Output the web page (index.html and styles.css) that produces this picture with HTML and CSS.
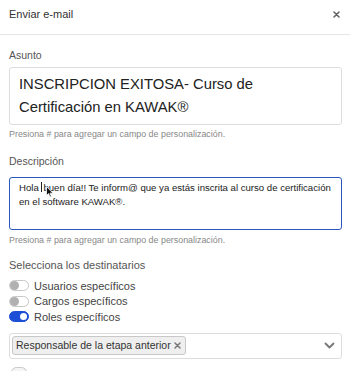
FILE: index.html
```html
<!DOCTYPE html>
<html lang="es">
<head>
<meta charset="utf-8">
<title>Enviar e-mail</title>
<link rel="stylesheet" href="styles.css">
</head>
<body>
<div class="modal">
  <div class="header">
    <span class="title">Enviar e-mail</span>
    <svg class="close" width="7" height="7" viewBox="0 0 7 7"><path d="M1 1 L6 6 M6 1 L1 6" stroke="#666" stroke-width="1.6" stroke-linecap="round"/></svg>
  </div>
  <div class="content">
    <div class="label l-asunto">Asunto</div>
    <div class="subject">INSCRIPCION EXITOSA- Curso de Certificación en KAWAK®</div>
    <div class="help">Presiona # para agregar un campo de personalización.</div>

    <div class="label l-desc">Descripción</div>
    <div class="desc">Hola <span class="caret"></span>buen día!! Te inform@ que ya estás inscrita al curso de certificación<br>en el software KAWAK®.<svg class="cursor" width="8" height="12" viewBox="0 0 8 12"><path d="M0.5 0.5 L0.5 9.5 L2.6 7.6 L4 11 L5.4 10.4 L4 7.2 L7 7.2 Z" fill="#111" stroke="#fff" stroke-width="0.8"/></svg></div>
    <div class="help">Presiona # para agregar un campo de personalización.</div>

    <div class="label l-dest">Selecciona los destinatarios</div>
    <div class="toggles">
      <div class="toggle"><span class="switch"><span class="knob"></span></span><span>Usuarios específicos</span></div>
      <div class="toggle"><span class="switch"><span class="knob"></span></span><span>Cargos específicos</span></div>
      <div class="toggle"><span class="switch on"><span class="knob"></span></span><span>Roles específicos</span></div>
    </div>

    <div class="select">
      <span class="tag">Responsable de la etapa anterior<svg class="tag-x" width="7" height="7" viewBox="0 0 7 7"><path d="M1 1 L6 6 M6 1 L1 6" stroke="#777" stroke-width="1.5" stroke-linecap="round"/></svg></span>
      <svg class="chev" width="11" height="7" viewBox="0 0 11 7"><path d="M1.5 1.5 L5.5 5.5 L9.5 1.5" fill="none" stroke="#777" stroke-width="1.8" stroke-linecap="round" stroke-linejoin="round"/></svg>
    </div>
    <div class="next"><span class="switch"></span></div>
  </div>
</div>
</body>
</html>
```
FILE: styles.css
```css
html, body {
  margin: 0;
  padding: 0;
  background: #fff;
}
body {
  font-family: "Liberation Sans", Arial, sans-serif;
  color: #333;
  width: 350px;
  height: 371px;
  overflow: hidden;
}
.header {
  height: 35px;
  box-sizing: border-box;
  border-bottom: 1px solid #e6e6e6;
  display: flex;
  align-items: flex-start;
  justify-content: space-between;
  padding: 7px 9px 0;
}
.title {
  font-size: 11px;
  line-height: 14px;
  color: #333;
}
.close {
  margin-top: 4px;
  margin-right: 1px;
}
.content {
  padding: 0 8px 0 9px;
}
.label {
  font-size: 10.5px;
  line-height: 14px;
  color: #555;
}
.l-asunto { margin-top: 13px; }
.subject {
  margin-top: 5px;
  border: 1px solid #ddd;
  border-radius: 3px;
  padding: 5px 9px;
  font-size: 14.8px;
  line-height: 23px;
  color: #222;
  height: 58px;
  box-sizing: border-box;
}
.help {
  font-size: 8.9px;
  line-height: 12px;
  color: #888;
  margin-top: 3px;
}
.l-desc { margin-top: 14px; }
.desc {
  position: relative;
  margin-top: 9px;
  border: 1px solid #2b56c0;
  border-radius: 3px;
  padding: 3px 4px 3px 9px;
  font-size: 9.6px;
  line-height: 14px;
  color: #222;
  height: 53px;
  box-sizing: border-box;
  white-space: nowrap;
}
.desc + .help { margin-top: 4px; }
.caret {
  display: inline-block;
  width: 1px;
  height: 10px;
  background: #222;
  vertical-align: -1px;
  margin-right: 1px;
}
.cursor {
  position: absolute;
  left: 36px;
  top: 8px;
}
.l-dest {
  margin-top: 12px;
  font-size: 11px;
}
.toggles {
  margin-top: 6px;
  display: flex;
  flex-direction: column;
}
.toggle {
  display: flex;
  align-items: center;
  gap: 5px;
  font-size: 11px;
  color: #444;
  height: 15.5px;
}
.switch {
  position: relative;
  display: inline-block;
  width: 20px;
  height: 11px;
  border: 1px solid #c8c8c8;
  border-radius: 6px;
  background: #fff;
  box-sizing: border-box;
}
.knob {
  position: absolute;
  left: 0;
  top: 0;
  width: 9px;
  height: 9px;
  border-radius: 50%;
  background: #b0b0b0;
}
.switch.on {
  background: #1d4fd6;
  border-color: #1d4fd6;
}
.switch.on .knob {
  left: auto;
  width: 7px;
  height: 7px;
  top: 1px;
  right: 1px;
  background: #fff;
}
.select {
  margin-top: 8px;
  border: 1px solid #ddd;
  border-radius: 3px;
  height: 26px;
  box-sizing: border-box;
  display: flex;
  align-items: center;
  justify-content: space-between;
  padding: 0 6px 0 2px;
}
.tag {
  display: flex;
  align-items: center;
  gap: 3px;
  background: #efefef;
  border: 1px solid #c8c8c8;
  border-radius: 3px;
  font-size: 10.5px;
  color: #333;
  padding: 1px 4px 1px 3px;
  line-height: 15px;
}
.next {
  margin-top: 8px;
  padding-left: 2px;
  height: 11px;
}
.next .switch {
  display: block;
  width: 16px;
  background: #f4f4f4;
}
```
